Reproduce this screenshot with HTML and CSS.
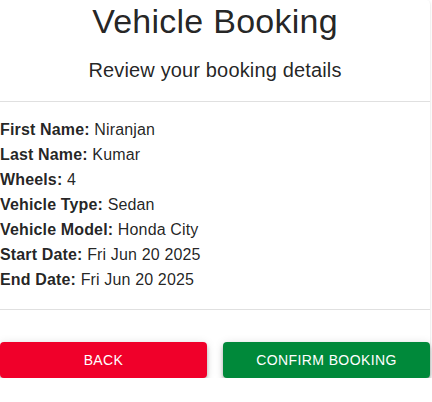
FILE: index.html
```html
<!DOCTYPE html>
<html>
<head>
<meta charset="utf-8">
<link rel="stylesheet" href="styles.css">
</head>
<body>
<div class="card">
  <h1 class="title">Vehicle Booking</h1>
  <h2 class="subtitle">Review your booking details</h2>
  <hr class="divider">
  <div class="details">
    <p class="row"><b>First Name:</b> Niranjan</p>
    <p class="row"><b>Last Name:</b> Kumar</p>
    <p class="row"><b>Wheels:</b> 4</p>
    <p class="row"><b>Vehicle Type:</b> Sedan</p>
    <p class="row"><b>Vehicle Model:</b> Honda City</p>
    <p class="row"><b>Start Date:</b> Fri Jun 20 2025</p>
    <p class="row"><b>End Date:</b> Fri Jun 20 2025</p>
  </div>
  <hr class="divider">
  <div class="actions">
    <button class="btn btn-back">Back</button>
    <button class="btn btn-confirm">Confirm Booking</button>
  </div>
</div>
</body>
</html>
```
FILE: styles.css
```css
html, body {
  margin: 0;
  padding: 0;
  background: #fff;
}
body {
  font-family: "Liberation Sans", Arial, sans-serif;
  color: rgba(0, 0, 0, 0.87);
}
.card {
  width: 430px;
  background: #fff;
  border-radius: 0 4px 4px 0;
  box-shadow: 0 2px 1px -1px rgba(0,0,0,0.2), 0 1px 1px 0 rgba(0,0,0,0.14), 0 1px 3px 0 rgba(0,0,0,0.12);
  display: flex;
  flex-direction: column;
}
.title {
  margin: 0;
  font-size: 34px;
  font-weight: 400;
  line-height: 42px;
  letter-spacing: 0.25px;
  text-align: center;
}
.subtitle {
  margin: 12px 0 0;
  font-size: 20px;
  font-weight: 400;
  line-height: 32px;
  letter-spacing: 0.15px;
  text-align: center;
}
.divider {
  margin: 0;
  border: 0;
  height: 1px;
  background: #e0e0e0;
}
.subtitle + .divider {
  margin-top: 15px;
}
.details {
  padding: 15px 0 17px;
}
.row {
  margin: 0;
  font-size: 16px;
  line-height: 25px;
  letter-spacing: 0.15px;
}
.row b {
  font-weight: 700;
}
.actions {
  display: flex;
  gap: 16px;
  margin-top: 32px;
}
.btn {
  flex: 1;
  height: 36px;
  border: 0;
  border-radius: 4px;
  color: #fff;
  font-family: "Liberation Sans", Arial, sans-serif;
  font-size: 14px;
  font-weight: 500;
  letter-spacing: 0.4px;
  text-transform: uppercase;
  box-shadow: 0 2px 4px -1px rgba(0,0,0,0.2), 0 4px 5px 0 rgba(0,0,0,0.14), 0 1px 10px 0 rgba(0,0,0,0.12);
  cursor: pointer;
}
.btn-back {
  background: #f0002a;
}
.btn-confirm {
  background: #00893a;
}
```
